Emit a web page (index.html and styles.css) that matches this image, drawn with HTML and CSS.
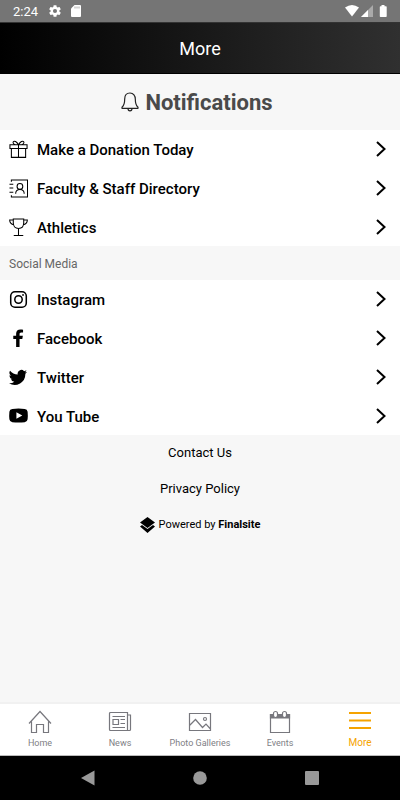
FILE: index.html
```html
<!DOCTYPE html>
<html lang="en">
<head>
<meta charset="utf-8">
<meta name="viewport" content="width=device-width, initial-scale=1">
<title>More</title>
<link rel="stylesheet" href="styles.css">
</head>
<body>
<div class="status">
  <span class="clock">2:24</span>
  <svg class="gear" width="14" height="14" viewBox="0 0 24 24"><path fill="#fff" fill-rule="evenodd" d="M19.4 13a7.500 7.500 0 0 0 0-2l2.200-1.700a.5.5 0 0 0 .1-.6l-2-3.500a.5.5 0 0 0-.6-.2l-2.500 1a7.300 7.300 0 0 0-1.700-1L14.500 2.400A.5.5 0 0 0 14 2h-4a.5.5 0 0 0-.5.400L9.100 5a7.700 7.700 0 0 0-1.700 1l-2.500-1a.5.5 0 0 0-.6.2l-2 3.500a.5.5 0 0 0 .1.600L4.600 11a7.900 7.900 0 0 0 0 2l-2.200 1.700a.5.5 0 0 0-.1.600l2 3.500c.1.200.4.300.6.200l2.500-1a7.300 7.300 0 0 0 1.700 1l.4 2.600c0 .2.200.4.500.4h4c.3 0 .5-.2.500-.4l.4-2.600a7.700 7.700 0 0 0 1.700-1l2.500 1c.2.100.5 0 .6-.2l2-3.500a.5.5 0 0 0-.1-.6zM12 15.500a3.500 3.500 0 1 1 0-7 3.500 3.500 0 0 1 0 7z"/></svg>
  <svg class="card" width="10" height="12" viewBox="0 0 10 12"><path fill="#fff" d="M3.500 0H9a1 1 0 0 1 1 1v10a1 1 0 0 1-1 1H1a1 1 0 0 1-1-1V3.500z"/><path stroke="#aaa" d="M4 1.500v2M6 1.500v2M8 1.500v2"/></svg>
  <svg class="signals" width="42" height="12" viewBox="0 0 42 12"><path fill="#fff" d="M0 2.500Q7-2.500 14 2.500L7 11.500z"/><path fill="#aaa" d="M28 0v12H16z"/><path fill="#fff" d="M23 5v7h-7z"/><path fill="#fff" d="M36.500 0h3v1.200H41a.7.700 0 0 1 .7.700v9.400a.7.700 0 0 1-.7.700h-5.500a.7.700 0 0 1-.7-.7V1.900a.7.700 0 0 1 .7-.7h1z"/></svg>
</div>
<header class="title-bar"><h1>More</h1></header>
<main>
  <h2 class="notifications">
    <svg width="18" height="20" viewBox="0 0 18 20"><path fill="none" stroke="#222" stroke-width="1.200" stroke-linejoin="round" d="M9 1C5.500 1 3.700 3.700 3.700 7c0 5-.7 6.500-2.700 8.300v1h16v-1C15 13.500 14.300 12 14.300 7c0-3.300-1.800-6-5.300-6zM7 16.500c0 1.500.8 2.300 2 2.300s2-.8 2-2.300"/></svg>
    Notifications
  </h2>
  <ul class="menu">
    <li><a href="#donate">
      <svg class="icon line" viewBox="0 0 20 20"><path d="M1 5h18v4H1zM2.500 9v9.300h15V9M10 5v13.300M10 5C8 1.500 5.500.5 4.500 1.800 3.700 3 5 4.500 7 5M10 5c2-3.500 4.500-4.500 5.500-3.200C16.300 3 15 4.500 13 5"/></svg>
      <span>Make a Donation Today</span><svg class="chevron" viewBox="0 0 10 16"><path d="M1 1l7.500 7L1 15"/></svg></a></li>
    <li><a href="#directory">
      <svg class="icon line" viewBox="0 0 20 20"><path d="M2.500 3V1h17v18h-17v-2M.5 5.500h4M.5 9.500h4M.5 14h4M7 15.500c0-3 1.500-4.500 4.500-4.500s4.500 1.500 4.500 4.500"/><circle cx="11.500" cy="7.800" r="3"/></svg>
      <span>Faculty &amp; Staff Directory</span><svg class="chevron" viewBox="0 0 10 16"><path d="M1 1l7.500 7L1 15"/></svg></a></li>
    <li><a href="#athletics">
      <svg class="icon line" viewBox="0 0 20 20"><path d="M4.500 1h11v4c0 3.500-2 6-5.500 6S4.500 8.500 4.500 5zM4.500 2H.7c0 3 1.500 4.500 4.600 5M15.500 2h3.800c0 3-1.500 4.500-4.600 5M10 11v7M5 18.500h10"/></svg>
      <span>Athletics</span><svg class="chevron" viewBox="0 0 10 16"><path d="M1 1l7.500 7L1 15"/></svg></a></li>
  </ul>
  <h3 class="section">Social Media</h3>
  <ul class="menu">
    <li><a href="#instagram">
      <svg class="icon line bold" viewBox="0 0 20 20"><rect x="1.800" y="1.800" width="16.400" height="16.400" rx="4.500"/><circle cx="10" cy="10" r="3.900"/><circle cx="14.800" cy="5.200" r=".3"/></svg>
      <span>Instagram</span><svg class="chevron" viewBox="0 0 10 16"><path d="M1 1l7.500 7L1 15"/></svg></a></li>
    <li><a href="#facebook">
      <svg class="icon" viewBox="0 0 20 20"><path d="M7.500 19v-8.500h-3V7h3V5c0-3 1.700-4.500 4.500-4.500.9 0 2 .1 2.800.3v3H13c-1.500 0-1.900.8-1.900 1.900V7h3.500l-.6 3.500h-2.900V19z"/></svg>
      <span>Facebook</span><svg class="chevron" viewBox="0 0 10 16"><path d="M1 1l7.500 7L1 15"/></svg></a></li>
    <li><a href="#twitter">
      <svg class="icon" viewBox="0 0 25 25"><path d="M23.600 4.900a10 10 0 0 1-2.800.8 4.900 4.900 0 0 0 2.200-2.700c-1 .5-2 1-3.100 1.200a4.900 4.900 0 0 0-8.400 4.500C7.400 8.500 3.800 6.600 1.400 3.600A4.900 4.900 0 0 0 2.900 10.200c-.8 0-1.600-.3-2.200-.6v.1a4.900 4.900 0 0 0 3.900 4.800 5 5 0 0 1-2.200.1 4.900 4.900 0 0 0 4.600 3.400A9.900 9.900 0 0 1 0 20a14 14 0 0 0 21.500-12.400c.8-.7 1.600-1.600 2.100-2.700z"/></svg>
      <span>Twitter</span><svg class="chevron" viewBox="0 0 10 16"><path d="M1 1l7.500 7L1 15"/></svg></a></li>
    <li><a href="#youtube">
      <svg class="icon" viewBox="0 0 20 20"><path fill-rule="evenodd" d="M3.500 2Q10 1.300 16.500 2 19.300 2.200 19.600 5q.4 4 0 8-.3 2.800-3.100 3-6.500.7-13 0Q.7 15.800.4 13q-.4-4 0-8Q.7 2.200 3.500 2zM7.800 5.600v6.800L14 9z"/></svg>
      <span>You Tube</span><svg class="chevron" viewBox="0 0 10 16"><path d="M1 1l7.500 7L1 15"/></svg></a></li>
  </ul>
  <div class="about">
    <a href="#contact">Contact Us</a>
    <a href="#privacy">Privacy Policy</a>
    <a class="powered" href="#finalsite"><svg width="15" height="16" viewBox="0 0 15 16"><path d="M7.500 0L15 5.500 7.500 11 0 5.500zM0 9.500l2-1.400 5.500 4 5.500-4 2 1.400L7.500 16z"/></svg><span>Powered by <b>Finalsite</b></span></a>
  </div>
</main>
<nav class="tabs">
  <a href="#home"><svg width="24" height="24" viewBox="0 0 24 24"><path d="M1 13.500L12 1.500l11 12M3.500 11.500v11h5v-8h7v8h5v-11"/></svg>Home</a>
  <a href="#news"><svg width="24" height="24" viewBox="0 0 24 24"><path d="M2.500 2.500h17v18h-17a1 1 0 0 1-1-1v-16a1 1 0 0 1 1-1zM19.500 5h3v14.500a1 1 0 0 1-1 1h-2M4.500 6.500h12.500M5 9.500h5.500v5H5zM12.500 9.500H17M12.500 13.500H17M4.500 17.500H17"/></svg>News</a>
  <a href="#photos"><svg width="24" height="24" viewBox="0 0 24 24"><path d="M1.500 3.500h21v17h-21zM1.500 15.500l6-6 7 8 3.500-3.500 4.500 5"/><circle cx="17" cy="9" r="1.500"/></svg>Photo Galleries</a>
  <a href="#events"><svg width="24" height="24" viewBox="0 0 24 24"><path d="M2.500 4.500h19v18h-19z"/><path class="solid" d="M2.500 4.500h19V8h-19z"/><rect class="ring" x="5.500" y="1.500" width="4" height="6" rx="2"/><rect class="ring" x="14.500" y="1.500" width="4" height="6" rx="2"/></svg>Events</a>
  <a class="current" href="#more"><svg width="24" height="24" viewBox="0 0 24 24"><path d="M1 3h22M1 10.500h22M1 18h22"/></svg>More</a>
</nav>
<div class="system">
  <button aria-label="Back"><svg width="16" height="16" viewBox="0 0 16 16"><path d="M14.500 .5v15L1 8z"/></svg></button>
  <button aria-label="Home"><svg width="16" height="16" viewBox="0 0 16 16"><circle cx="8" cy="8" r="6.800"/></svg></button>
  <button aria-label="Recent apps"><svg width="16" height="16" viewBox="0 0 16 16"><rect x="1" y="1" width="14" height="14" rx="1"/></svg></button>
</div>
</body>
</html>
```

FILE: styles.css
```css
* { box-sizing: border-box; }
body {
  margin: 0;
  min-height: 100vh;
  display: flex;
  flex-direction: column;
  background: #f7f7f7;
  color: #000;
  font-family: Roboto, "Liberation Sans", sans-serif;
}
a { color: inherit; text-decoration: none; }
h1, h2, h3, ul { margin: 0; padding: 0; }
svg { flex: none; display: block; }
.status {
  height: 22px;
  padding: 0 13px;
  display: flex;
  align-items: center;
  background: #757575;
  color: #fff;
}
.clock { font-size: 13px; font-weight: 400; }
.gear { margin-left: 10px; }
.card { margin-left: 9px; }
.signals { margin-left: auto; }
.title-bar {
  height: 52px;
  display: flex;
  align-items: center;
  justify-content: center;
  background: linear-gradient(to right, #000, #303030);
  border-top: 1px solid #333;
  border-bottom: 1px solid #000;
  color: #fff;
}
.title-bar h1 { font-size: 18px; font-weight: 400; }
main { flex: 1; }
.notifications {
  height: 56px;
  display: flex;
  align-items: center;
  justify-content: center;
  gap: 6px;
  padding-right: 6px;
  color: #4a4a4a;
  font-size: 22px;
  font-weight: 700;
}
.menu {
  display: grid;
  gap: 1px;
  background: #fff;
  list-style: none;
}
.menu a {
  height: 38px;
  padding: 0 14px 0 9px;
  display: flex;
  align-items: center;
  gap: 9px;
  font-size: 15px;
  font-weight: 500;
}
.menu span { flex: 1; padding-top: 2px; }
.icon { width: 19px; height: 19px; }
.line { fill: none; stroke: #000; stroke-width: 1.1; }
.bold { stroke-width: 1.6; }
.chevron {
  width: 10px;
  height: 16px;
  fill: none;
  stroke: #000;
  stroke-width: 2;
}
.section {
  height: 34px;
  padding: 0 9px;
  line-height: 36px;
  color: #666;
  font-size: 12px;
  font-weight: 400;
}
.about {
  display: flex;
  flex-direction: column;
  align-items: center;
  font-size: 13px;
  line-height: 36px;
}
.powered { display: flex; align-items: center; gap: 4px; font-size: 11px; }
.powered b { font-weight: 700; }
.tabs {
  height: 54px;
  display: grid;
  grid-template-columns: repeat(5, 1fr);
  background: #fff;
  border-top: 2px solid #f1f1f1;
  border-bottom: 1px solid #bbb;
  color: #808085;
  font-size: 9px;
}
.tabs a {
  padding-top: 6px;
  display: flex;
  flex-direction: column;
  align-items: center;
  gap: 3px;
  line-height: 12px;
  white-space: nowrap;
}
.tabs svg { fill: none; stroke: #77777d; stroke-width: 1.2; }
.tabs .solid { fill: #77777d; }
.tabs .ring { fill: #fff; }
.tabs .current { color: #f5a300; font-size: 10px; }
.tabs .current svg { stroke: #f5a300; stroke-width: 2; }
.system {
  height: 44px;
  padding: 0 32px;
  display: grid;
  grid-template-columns: repeat(3, 1fr);
  place-items: center;
  background: #000;
}
.system button { padding: 0; border: 0; background: none; }
.system svg { fill: #999; }
```
